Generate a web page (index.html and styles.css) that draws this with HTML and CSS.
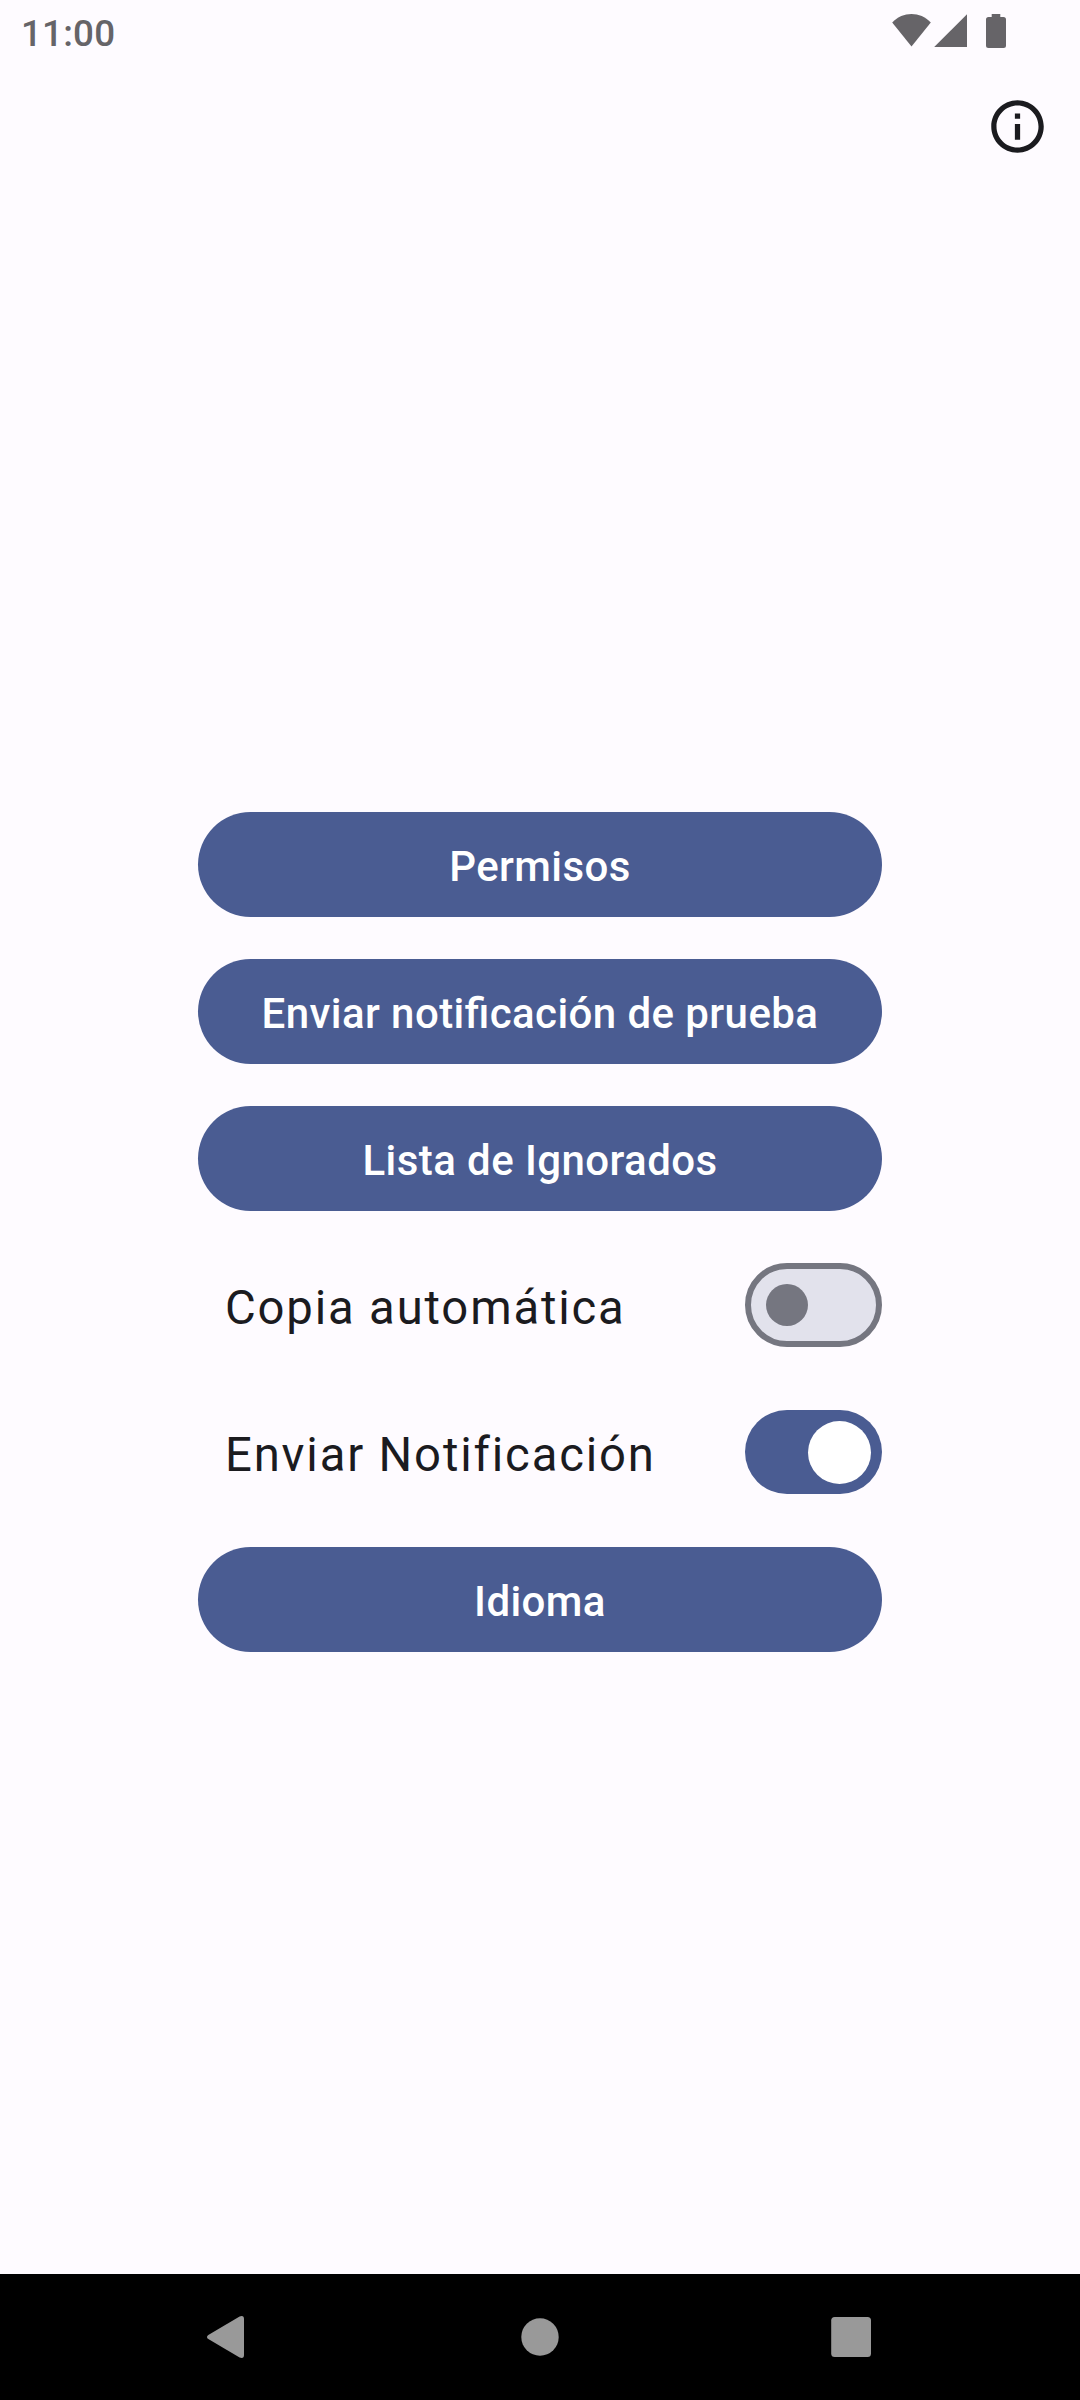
FILE: index.html
```html
<!DOCTYPE html>
<html lang="es">
<head>
<meta charset="utf-8">
<title>Ajustes</title>
<link rel="stylesheet" href="styles.css">
</head>
<body>
<header class="status-bar">
  <span class="clock">11:00</span>
  <svg class="status-icons" width="115" height="36" viewBox="0 0 115 36" aria-hidden="true">
    <path d="M0.2 9.500C5.800 3.700 12.300 1 19.500 1S33.200 3.700 38.800 9.500L19.500 33.500z"/>
    <path d="M75 1.200V34H42.200z"/>
    <path d="M99.700 1h8.600v3h3.200q2.500 0 2.500 2.500v26q0 2.500-2.500 2.500h-15q-2.500 0-2.500-2.500v-26q0-2.500 2.500-2.500h3.200z"/>
  </svg>
</header>
<div class="app-bar">
  <button class="icon-button" aria-label="Información">
    <svg width="63" height="63" viewBox="0 0 24 24"><path d="M11 7h2v2h-2zM11 11h2v6h-2zM12 2C6.480 2 2 6.480 2 12s4.480 10 10 10 10-4.480 10-10S17.520 2 12 2zM12 20c-4.410 0-8-3.590-8-8s3.590-8 8-8 8 3.590 8 8-3.590 8-8 8z"/></svg>
  </button>
</div>
<main class="content">
  <div class="settings">
    <button class="button">Permisos</button>
    <button class="button">Enviar notificación de prueba</button>
    <button class="button">Lista de Ignorados</button>
    <div class="row"><span class="label">Copia automática</span><span class="switch" role="switch" aria-checked="false"><span class="thumb"></span></span></div>
    <div class="row"><span class="label">Enviar Notificación</span><span class="switch switch-on" role="switch" aria-checked="true"><span class="thumb"></span></span></div>
    <button class="button">Idioma</button>
  </div>
</main>
<nav class="nav-bar">
  <svg width="64" height="64" viewBox="0 0 64 64"><path d="M11.300 29.900L42.600 11.400Q47 9.800 47 14V50Q47 54.200 42.600 52.600L11.300 34.100Q8.700 32 11.300 29.900z"/></svg>
  <svg width="64" height="64" viewBox="0 0 64 64"><circle cx="32" cy="32" r="18.700"/></svg>
  <svg width="64" height="64" viewBox="0 0 64 64"><rect x="12.200" y="12.100" width="39.800" height="39.800" rx="3.500"/></svg>
</nav>
</body>
</html>
```
FILE: styles.css
```css
* { box-sizing: border-box; }

body {
  margin: 0;
  height: 2400px;
  display: flex;
  flex-direction: column;
  background: #fefbff;
  color: #1b1b1f;
  font-family: Roboto, sans-serif;
}

button {
  border: 0;
  padding: 0;
  font: inherit;
}

.status-bar {
  height: 63px;
  padding: 0 73px 0 21px;
  display: flex;
  justify-content: space-between;
  color: #666468;
}

.clock {
  padding-top: 2px;
  font-size: 36.75px;
  font-weight: 500;
  line-height: 63px;
  letter-spacing: 0.2px;
}

.status-icons {
  margin-top: 13px;
  fill: currentColor;
}

.app-bar {
  height: 126px;
  padding: 32px 31px 0 0;
  display: flex;
  justify-content: flex-end;
  align-items: flex-start;
}

.icon-button {
  width: 63px;
  height: 63px;
  background: none;
  fill: #1b1b1f;
}

.icon-button svg { display: block; }

.content {
  flex: 1;
  padding-top: 623px;
  display: flex;
  justify-content: center;
  align-items: flex-start;
}

.settings {
  width: 684px;
  display: flex;
  flex-direction: column;
  gap: 42px;
}

.button {
  height: 105px;
  padding-top: 3px;
  border-radius: 53px;
  background: #4a5c92;
  color: #fff;
  font-size: 42px;
  font-weight: 500;
  letter-spacing: 0.42px;
  font-feature-settings: "liga" 1;
}

.row {
  height: 105px;
  padding: 0 0 1px 27px;
  display: flex;
  align-items: center;
  justify-content: space-between;
}

.label {
  padding-top: 5px;
  font-size: 47.25px;
  letter-spacing: 1.83px;
}

.switch {
  width: 137px;
  height: 84px;
  padding: 0 15px;
  display: flex;
  align-items: center;
  border: 6px solid #757680;
  border-radius: 42px;
  background: #e2e2ec;
}

.thumb {
  width: 42px;
  height: 42px;
  border-radius: 50%;
  background: #757680;
}

.switch-on {
  padding: 0 11px;
  justify-content: flex-end;
  border: 0;
  background: #4a5c92;
}

.switch-on .thumb {
  width: 63px;
  height: 63px;
  background: #fff;
}

.nav-bar {
  height: 126px;
  padding: 0 197px;
  display: flex;
  align-items: center;
  justify-content: space-between;
  background: #000;
  fill: #999;
}
```
